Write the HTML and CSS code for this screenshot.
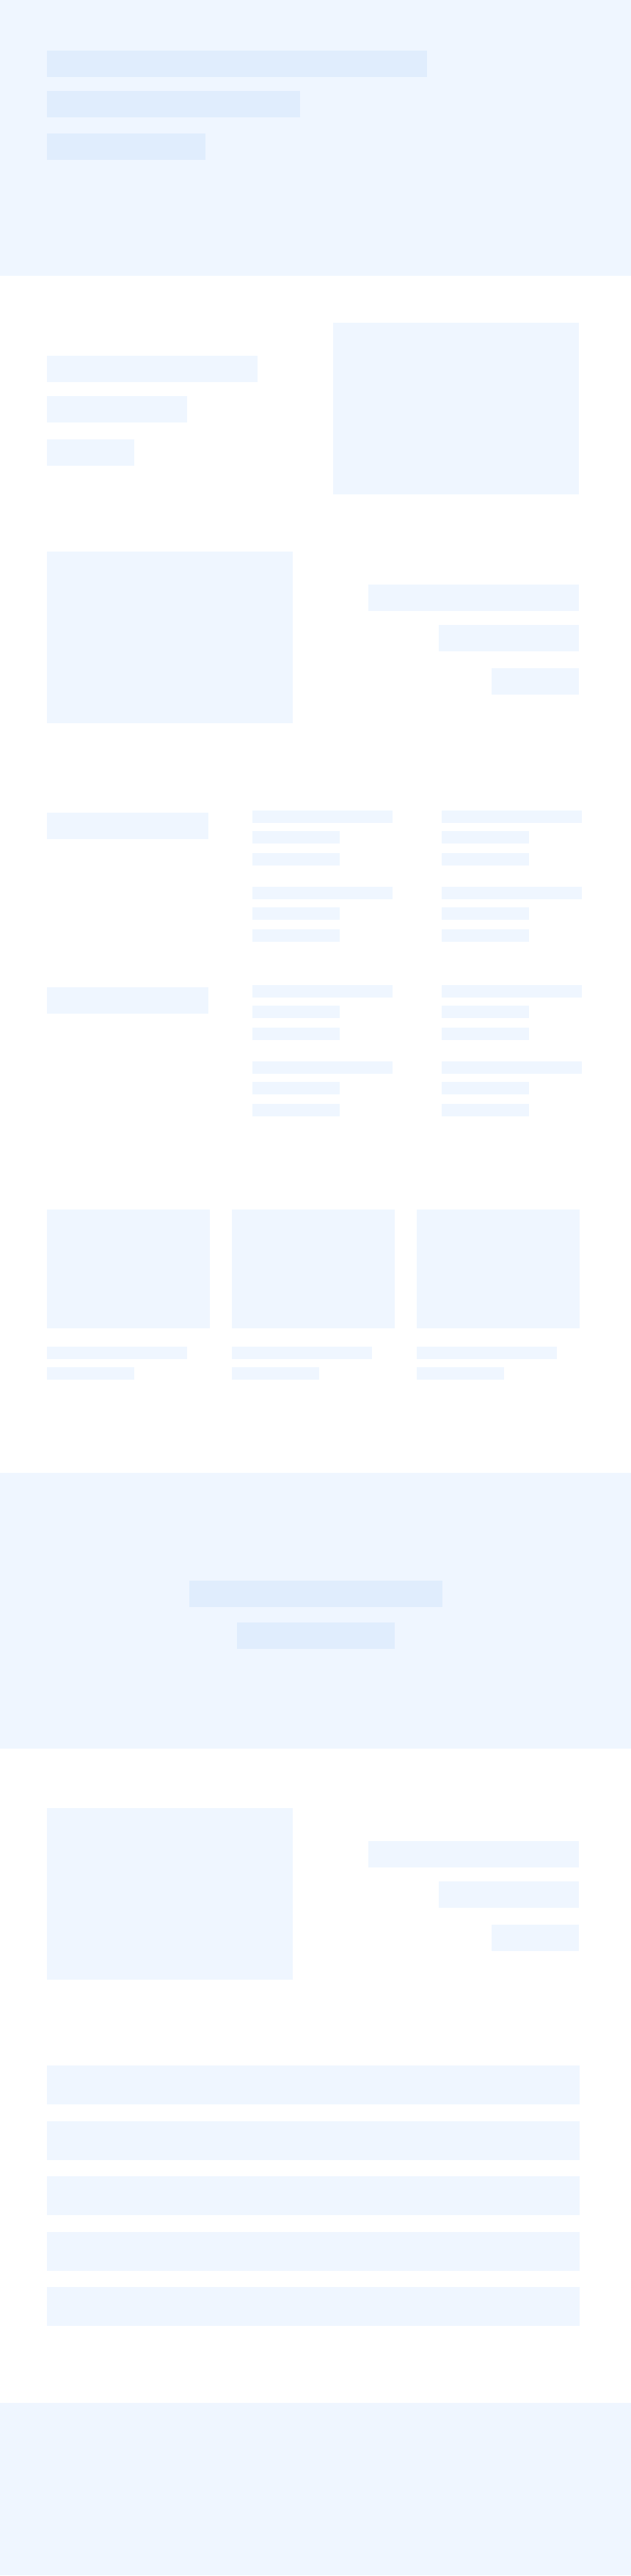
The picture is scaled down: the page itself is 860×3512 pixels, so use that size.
FILE: index.html
```html
<!DOCTYPE html>
<html lang="en">
<head>
<meta charset="utf-8">
<title>Wireframe</title>
<link rel="stylesheet" href="styles.css">
</head>
<body>
<header class="hero">
  <div class="bar bar-hero-1"></div>
  <div class="bar bar-hero-2"></div>
  <div class="bar bar-hero-3"></div>
</header>

<section class="feature feature-first">
  <div class="feature-text">
    <div class="ph ph-t1"></div>
    <div class="ph ph-t2"></div>
    <div class="ph ph-t3"></div>
  </div>
  <div class="ph feature-media"></div>
</section>

<section class="feature feature-second">
  <div class="ph feature-media"></div>
  <div class="feature-text align-end">
    <div class="ph ph-t1"></div>
    <div class="ph ph-t2"></div>
    <div class="ph ph-t3"></div>
  </div>
</section>

<section class="links">
  <div class="links-row">
    <div class="ph links-label"></div>
    <div class="links-col">
      <div class="group"><div class="ph line-long"></div><div class="ph line-short"></div><div class="ph line-short last"></div></div>
      <div class="group"><div class="ph line-long"></div><div class="ph line-short"></div><div class="ph line-short last"></div></div>
    </div>
    <div class="links-col">
      <div class="group"><div class="ph line-long"></div><div class="ph line-short"></div><div class="ph line-short last"></div></div>
      <div class="group"><div class="ph line-long"></div><div class="ph line-short"></div><div class="ph line-short last"></div></div>
    </div>
  </div>
  <div class="links-row">
    <div class="ph links-label"></div>
    <div class="links-col">
      <div class="group"><div class="ph line-long"></div><div class="ph line-short"></div><div class="ph line-short last"></div></div>
      <div class="group"><div class="ph line-long"></div><div class="ph line-short"></div><div class="ph line-short last"></div></div>
    </div>
    <div class="links-col">
      <div class="group"><div class="ph line-long"></div><div class="ph line-short"></div><div class="ph line-short last"></div></div>
      <div class="group"><div class="ph line-long"></div><div class="ph line-short"></div><div class="ph line-short last"></div></div>
    </div>
  </div>
</section>

<section class="cards">
  <div class="card">
    <div class="ph card-media"></div>
    <div class="ph line-long"></div>
    <div class="ph line-short"></div>
  </div>
  <div class="card">
    <div class="ph card-media"></div>
    <div class="ph line-long"></div>
    <div class="ph line-short"></div>
  </div>
  <div class="card">
    <div class="ph card-media"></div>
    <div class="ph line-long"></div>
    <div class="ph line-short"></div>
  </div>
</section>

<section class="cta">
  <div class="bar bar-cta-1"></div>
  <div class="bar bar-cta-2"></div>
</section>

<section class="feature feature-third">
  <div class="ph feature-media"></div>
  <div class="feature-text align-end">
    <div class="ph ph-t1"></div>
    <div class="ph ph-t2"></div>
    <div class="ph ph-t3"></div>
  </div>
</section>

<section class="faq">
  <div class="ph faq-item"></div>
  <div class="ph faq-item"></div>
  <div class="ph faq-item"></div>
  <div class="ph faq-item"></div>
  <div class="ph faq-item"></div>
</section>

<footer class="footer"></footer>
</body>
</html>
```

FILE: styles.css
```css
* { box-sizing: border-box; }

html, body {
  margin: 0;
  padding: 0;
  background: #ffffff;
  font-family: "Liberation Sans", Arial, sans-serif;
}

.ph { background: #eff6ff; }
.bar { background: #e0edfd; height: 36px; }

/* Hero */
.hero {
  background: #eff6ff;
  height: 376px;
  padding: 69px 0 0 64px;
}
.bar-hero-1 { width: 518px; margin-bottom: 19px; }
.bar-hero-2 { width: 345px; margin-bottom: 22px; }
.bar-hero-3 { width: 216px; }

/* Feature rows */
.feature {
  display: grid;
  grid-template-columns: 335px 335px;
  column-gap: 55px;
  margin-left: 64px;
  width: 725px;
}
.feature-first { margin-top: 64px; }
.feature-second { margin-top: 78px; }
.feature-third { margin-top: 81px; }

.feature-media { height: 234px; }

.feature-text {
  display: flex;
  flex-direction: column;
  align-items: flex-start;
  padding-top: 45px;
}
.feature-text.align-end { align-items: flex-end; }
.feature-text .ph { height: 36px; }
.ph-t1 { width: 287px; margin-bottom: 19px; }
.ph-t2 { width: 191px; margin-bottom: 23px; }
.ph-t3 { width: 119px; }

/* Link lists */
.links {
  margin: 119px 0 0 64px;
  display: flex;
  flex-direction: column;
  gap: 59px;
}
.links-row {
  display: grid;
  grid-template-columns: 280px 258px 191px;
}
.links-label { width: 220px; height: 36px; margin-top: 3px; }
.links-col {
  display: flex;
  flex-direction: column;
  gap: 29px;
}
.group { display: flex; flex-direction: column; }
.line-long, .line-short { height: 17px; }
.line-long { width: 191px; margin-bottom: 11px; }
.line-short { width: 119px; margin-bottom: 13px; }
.line-short.last { margin-bottom: 0; }

/* Cards */
.cards {
  margin: 127px 0 0 64px;
  width: 726px;
  display: grid;
  grid-template-columns: repeat(3, 1fr);
  column-gap: 30px;
}
.card-media { height: 162px; margin-bottom: 25px; }
.card .line-short { margin-bottom: 0; }

/* CTA band */
.cta {
  margin-top: 127px;
  background: #eff6ff;
  height: 376px;
  padding-top: 147px;
  display: flex;
  flex-direction: column;
  align-items: center;
}
.bar-cta-1 { width: 345px; margin-bottom: 21px; }
.bar-cta-2 { width: 215px; }

/* FAQ */
.faq {
  margin: 117px 0 0 64px;
  width: 726px;
  display: flex;
  flex-direction: column;
  gap: 22.5px;
}
.faq-item { height: 53px; }

/* Footer */
.footer {
  margin-top: 105px;
  background: #eff6ff;
  height: 235px;
}
```
